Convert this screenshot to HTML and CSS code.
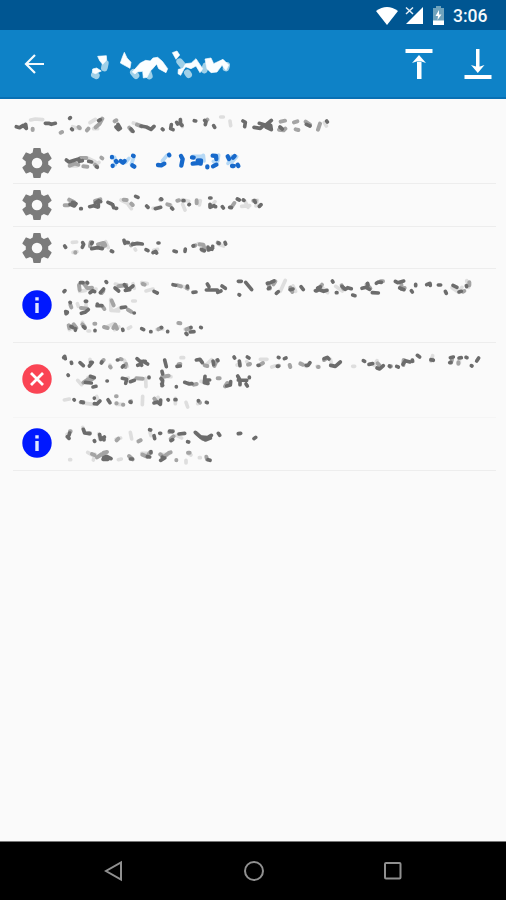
FILE: index.html
```
<!DOCTYPE html>
<html lang="en">
<head>
<meta charset="utf-8">
<title>Status</title>
<link rel="stylesheet" href="styles.css">
</head>
<body>
<svg class="defs" aria-hidden="true">
  <symbol id="gear" viewBox="2 2 20 20"><path d="M19.43 12.98c.04-.32.07-.64.07-.98s-.03-.66-.07-.98l2.11-1.65c.19-.15.24-.42.12-.64l-2-3.46c-.12-.22-.39-.3-.61-.22l-2.49 1c-.52-.4-1.08-.73-1.69-.98l-.38-2.65A.49.49 0 0 0 14 2h-4c-.25 0-.46.18-.49.42l-.38 2.65c-.61.25-1.17.59-1.69.98l-2.49-1c-.23-.09-.49 0-.61.22l-2 3.46c-.13.22-.07.49.12.64l2.11 1.65c-.04.32-.07.65-.07.98s.03.66.07.98l-2.11 1.65c-.19.15-.24.42-.12.64l2 3.46c.12.22.39.3.61.22l2.49-1c.52.4 1.08.73 1.69.98l.38 2.65c.03.24.24.42.49.42h4c.25 0 .46-.18.49-.42l.38-2.65c.61-.25 1.17-.59 1.69-.98l2.49 1c.23.09.49 0 .61-.22l2-3.46c.12-.22.07-.49-.12-.64l-2.11-1.65zM12 15.500a3.500 3.500 0 1 1 0-7 3.500 3.500 0 0 1 0 7z"/></symbol>
  <symbol id="info" viewBox="0 0 30 30"><circle cx="15" cy="15" r="14.700"/><path fill="#dfe6ff" d="M13.300 7.200h3.400v3.300h-3.400zM13.300 13h3.400v10h-3.400z"/></symbol>
</svg>

<header>
  <div class="status">
    <svg class="wifi" width="22" height="18" viewBox="0 0 22 18"><path fill="#fff" d="M0 4Q11-4 22 4L11 18z"/></svg>
    <svg class="signal" width="19" height="19" viewBox="0 0 19 19"><path fill="#fff" d="M18 1v17H1z"/><path stroke="#e4eef6" stroke-width="1.500" d="M1 1.500l7 6.500M8 1.500L1 8"/></svg>
    <svg class="battery" width="11" height="19" viewBox="0 0 11 19"><path fill="#6fa3bd" d="M3 0h5v2h3v13H0V2h3z"/><path fill="#fff" d="M0 14.500h11V19H0zM6 4L2.500 10H5l-.5 4L8.500 8.500H6z"/></svg>
    <span class="clock">3:06</span>
  </div>
  <div class="bar">
    <svg class="back" width="21" height="20" viewBox="0 0 21 20"><path d="M20 10H2M11 1L2 10l9 9"/></svg>
    <svg class="title" width="150" height="67" viewBox="264 90 450 201">
      <g class="pale"><path d="M316 190l-3 14M283 224l6 3M400 217l8 10M444 216l4 12M539 185l10 12M562 218l4 6M617 198l-4 12M680 196l-2 8"/></g>
      <g class="white"><path d="M293 169l26-2 1 13-12 13-9-11zM278 207l12-3 14 9-18 8-9-4zM373 157l8 17 12 13-3 18-29-16 6-17zM397 216l24-27 16-8 14 2 8-9 14-2 14 12 16 22-5 12-22-12-6-14-12 14-8 8-9 18-11 2-2-20-17 2-6 6zM517 158l14-5 8 12-11 13zM535 208l14-3 8-14 17-2 14-13 8 12 12 18-8 12-12-20-15 8-17-6-14 26-8-5zM615 177l18-3 8 17 28-13 17 17-8 16-12-15-15 20-18 2-12-12z"/></g>
    </svg>
    <svg class="upload" width="28" height="32" viewBox="0 0 28 32"><path d="M.5 1h27v4H.5zM12 14h4.500v17H12zM14 7l7 8-4.500-1.500h-5L7 15z"/></svg>
    <svg class="download" width="28" height="32" viewBox="0 0 28 32"><path d="M.5 27h27v4H.5zM12 1h3.500v18H12zM13.800 25L7 17l5 1.500h4L20.500 17z"/></svg>
  </div>
</header>

<main>
  <svg class="heading smudge" width="360" height="43" viewBox="39 -18 1080 129">
    <g class="l"><path d="M92 45l14-3 22 2M218 65l22 6M270 53l16-10M281 71h12M400 54l20 6M542 43l5 22M662 36l8 0M690 48l2 14M973 53l6 10"/></g>
    <g class="m"><path d="M98 75v-4M182 83l4-2M236 66l3 3M261 76l4-5M287 67l12-11 8-15M344 49l5-3M388 68l8 10M411 59l14 5M622 44l-3 3M837 74l14 2 5-5M842 50l13-3M954 74l6-18M882 52l10-3M917 50l13 9M887 73l8 2"/></g>
    <g class="d"><path d="M49 65l10 3 11-7 9 9-2-12M136 55l10 0 8 3 12-3M209 40l2-2M215 72l2 2M296 47l5-3M348 66l7 8 6-4-7-12M393 72l6 7M423 63l16 3 14 7 9-9M487 72l2 2M514 59l-2 12 7 3M530 52l3 5M541 44v12l5 5M583 47l4 1M614 46l4 4-2 9M641 62l3 5M729 48l7 4-2 13M762 67l19 3 12-11-15-4M798 66l16 8-2-13-14-1 16-14M840 66l7 6M919 58l11 5M980 48l2 3"/></g>
  </svg>

  <section class="row r1">
    <svg class="icon gear"><use href="#gear"/></svg>
    <svg class="smudge" width="430" height="41" viewBox="180 111 1290 123">
      <g class="l"><path d="M213 183h18M247 159l18 1 20 10M283 179l14-7"/></g>
      <g class="m"><path d="M209 182l15-6 11 3M250 184l12 1M241 159l18 0M304 158l3 2M285 179l6 5"/></g>
      <g class="d"><path d="M199 165l8 6 16-5 13-4M238 169l9-2M266 169l9 2M289 185l3 2"/></g>
      <g class="bl"><path d="M344 157l2 22M377 172l10-12M394 178l7-20M487 168l14-17M578 154l27 0M610 151l2 17M640 169l11 8M656 150l-3 18M684 175l12-21M710 155l-15 17"/></g>
      <g class="b"><path d="M336 156v1M338 182v1M348 168l2 3M362 168l7 5 5-5M399 152l2 1M397 181l6 4M474 180l10 1 9-5M507 149l1 2M543 153l5 9-4 20M576 157l5 1M578 176l16-2 8 2 1-10-10 0M622 184v3M638 152l10 1 1 9M639 184l10-5M683 154l4 8M704 153l-5 5M696 183h5M713 179l2 4"/></g>
    </svg>
  </section>

  <section class="row r2">
    <svg class="icon gear"><use href="#gear"/></svg>
    <svg class="smudge" width="430" height="42" viewBox="180 3 1290 126">
      <g class="l"><path d="M206 52l12 13M363 51l18 9M385 65l9 12M459 76l22-3M512 66l4 9M548 64l7 17M548 50l18 5M601 53l-3 13M645 56l-10 12M736 56l8 17M725 70l24-2M772 52l-4 17"/></g>
      <g class="m"><path d="M194 67l11 0M208 50l14 7M285 54l16-5M371 50l9 1M394 62l4 4M481 50l3-1M502 64l7 2M532 53l5-1M590 61v-9M695 72l8-12M760 53l7 0"/></g>
      <g class="d"><path d="M210 64l13 5 5-7-10-4M242 77l2 0M269 71l12-3 12 4M286 60l10-7 6 3M295 64v8M324 58l11 5M338 65l3 9M347 76l3 0M407 40l7 3M440 69l4 4M466 77l16-4M483 48l2 1M515 75l3 3M549 53l3 0M567 65l1-1M629 45l4 0M630 64l0 9 12-5M646 71h1M667 71l3 4M689 73l5 1M712 48l6 3M730 51l2 1M763 53l3 5M778 70l5-5"/></g>
    </svg>
  </section>

  <section class="row r3">
    <svg class="icon gear"><use href="#gear"/></svg>
    <svg class="smudge" width="430" height="41" viewBox="180 132 1290 123">
      <g class="l"><path d="M217 178l13-1M219 208l12-2M317 176l8 18M405 198l2 3M461 202l12-3M594 182l8 7M655 184l16 5"/></g>
      <g class="m"><path d="M226 208v1M272 178l-2 12M294 184l16-4M306 194l10-7-3-6M393 187l5-5M583 189l3-2M599 184l11 1 4 14M607 202l5 1M653 179l5 2"/></g>
      <g class="d"><path d="M194 189l3 4M248 179l3 5-4 9M275 197l18-3 14 3M275 182l2-4M334 204l4 2M372 172l3 9M380 178l5 1M397 184l15-3 15 2M438 200l6 3M459 209l8-4 3 5M474 180l3 0M522 204l7 2M556 198l-1 7M579 189l2-1M604 199l9 4M624 192l1 9 13-6M638 190l-2 9M655 180l2 1M675 178l2 5"/></g>
    </svg>
  </section>

  <section class="row r4">
    <svg class="icon info"><use href="#info"/></svg>
    <svg class="smudge" width="430" height="73" viewBox="180 3 1290 219">
      <g class="l"><path d="M246 44l20 17M239 70l18-3M273 66l15-3M346 48l25 6M399 47l4 14M425 44l17 3M438 69l21-6M543 53l14 6M232 107l3 8M258 98v17M332 94l1 33 23 2M345 128l17-9M398 99l8 0M208 185l13-6M247 163l8 18M264 189l5 0M317 178l23-10M344 185l13-8M385 181l7-4M471 184l17-1M555 184l14 4"/></g>
      <g class="m"><path d="M237 51l2 15M252 47l8 11M264 61l12-2M305 75l5-6M355 55l24-4M428 48l6 2M533 52l10 3M560 60l3 2M211 110l3 8M243 120l19 2M309 117l4 6M335 98l6 14M384 125l10 6M206 172l2 8M221 169l8 11M247 169l7 7M283 167h3M312 177l11 3M340 180l6-10 5 12M475 184l7-4M535 165l6 1M559 184l11-4"/></g>
      <g class="d"><path d="M192 71l3-3M241 44l8 0M261 43l2 2M270 74l8-6 6 3M301 74l10-11M318 41l2 2M345 60l11 9M373 50l12 15 14-11M376 67l13-2M462 70l6 3 4 2M519 50l8 2M562 54l1 4M579 73l9-1M622 48l5 8M619 66l18 0 15 0M653 73l10-4M666 54l10 7M715 40l9 0M737 43l18 22M717 80l2 1M210 103l1 1M198 137l4-3M197 131l5 1M244 136l11-3 10-8M256 100l4 0M291 113l15 0M292 108v4M364 119l13-2M402 135h1M213 175l5 3M226 182v5M250 176l5 4M285 187v1M368 184l1 3M425 182l6 3M452 191h1M484 178l1 1M503 190v1M558 196l3 3M571 192l11-1M573 178v1M602 178l2 1"/></g>
      <g transform="translate(759 0)">
        <g class="l"><path d="M82 70l15-33M120 54l8 16M206 57l18 17M248 55l20 14M597 59l20 14 10-15M641 38l6 20"/></g>
        <g class="m"><path d="M45 47l6 14M67 40l-6 9M112 59l6 13M191 69l16-19M266 52l5 10M341 49l11 12M383 40h7M445 49l1 14 9-3M649 43v9M630 71l4-2"/></g>
        <g class="d"><path d="M43 46l9-2 11-5M46 62l4-3M70 76l6-5M111 65l9-2M144 56l7 9M187 68l12-3 13 5 10-3M194 60l8-3M238 39l2 3M250 74l2 0M267 55l10 9 7-5 11 3M299 81l7 2M327 61l12-3 11 6M344 46l1 6M370 46l6-4 9 1M358 74l18 1M427 40l7 4 18-5M440 60l13 5M475 68l3 4M488 49v4M521 50l9-4M531 46l1 6M556 51h7M577 70l3 6M600 52l12 6M618 72l7-2M640 53l1 3"/></g>
      </g>
    </svg>
  </section>

  <section class="row r5">
    <svg class="icon" viewBox="0 0 30 30"><circle fill="#fa4454" cx="15" cy="15" r="14.700"/><path fill="none" stroke="#fff" stroke-width="2.800" d="M9 9l12 12M21 9L9 21"/></svg>
    <svg class="smudge" width="430" height="74" viewBox="180 3 1290 222">
      <g class="l"><path d="M270 52v12M330 69l2 8M373 55l9 18M543 47h8M621 66l14-13M711 69l10-3M740 59l9 9M233 115l12 13M264 107l18-2M377 111l8-3M437 109l1 25M505 104l8 0M567 121l10 4M603 118l18 7M193 174l15-3M257 184l22 3M290 163l6 15M349 187l20 0M428 163l-1 25M478 179l-4-13M558 181l5 14M593 185l5-7M526 169v16"/></g>
      <g class="m"><path d="M305 60l6-6M330 74l2 2M361 51l4 1M378 66l-2 9M536 67l5-1M614 70l8 2M650 56l-7 16M744 68l6-2M250 122l14-10 14-1M409 109l19 1M486 105l20-4M582 128l8-2M653 109h6M675 133l7-10M242 181l8-1M348 163h2M349 184l1 0M369 188l1 0M390 179l3-1M463 170l6 9M600 182l-3-4"/></g>
      <g class="d"><path d="M191 47l3-4 2 7M214 61l1 3M240 62l10 9M268 72l9-11-5 0M304 63l2-3M352 54l2 0M367 75l4-4M411 50l10 9 15-1M413 70l10-3 2 3M430 58l13 8M494 54l5 20M531 73l10-1M589 54l11-2 7 10M639 57l2 11M653 54l1 2M702 45l2 3M718 57l2 14M742 45l5 3M204 99l1 1M256 121l18 2M271 103l12 4M279 135l9-2M321 117h1M367 109l13 3-3 12M391 119l12-4M447 105v2M486 88l2 8M483 110l5 5-2 16M485 126l3 4M554 121l14 5 8-1M529 134v1M615 103l-2 19 11 2M616 114l13 0M680 132l11-3 1-10M713 102l7 12 0 14M715 114l25 1M738 126l4 6M748 105v2M222 173l1 1M244 180l6 2M283 168v1M283 185l8 1 9-9M324 173l6 9M391 180l2 1M462 183l11-3 8 7 1-13M504 173l1 1M525 173l3 0M595 176v1M619 181l3 1"/></g>
      <g transform="translate(759 0)">
        <g class="l"><path d="M22 52l20 0M56 75l10-3M143 63l17 10M192 73h4M232 52l4 14M299 73h6M364 70l8-14M539 41l-5 17M619 51v13"/></g>
        <g class="m"><path d="M22 68l8-5M74 72l4-1M110 69l2 6M142 65l7 3M195 75h2M213 54l7-5M374 64l6 7M412 74l2-1M452 54l-1 15M534 54l5-1M597 53l-3 9M616 61v4"/></g>
        <g class="d"><path d="M15 70l3 0M76 46l2 1M94 50l5-2M73 73l3 0M159 70l6 0 6-8M213 50l10-4 5 5M233 70l14 3 15-13M331 56l4 2M348 67l11-2M372 78l8 3 11-10M409 72l2 1M431 73l5 2M450 67l7-11 14 4M478 54l1 4M493 40l7 5M534 53l7 2M592 47l9-2M590 62l4-1M618 48l7-1M639 46l3 1M655 71l2 1M671 57l6-9"/></g>
      </g>
    </svg>
  </section>

  <section class="row r6">
    <svg class="icon info"><use href="#info"/></svg>
    <svg class="smudge" width="430" height="52" viewBox="180 0 1290 156">
      <g class="l"><path d="M201 49l8-4M248 28l8 17M296 47l4 18M348 64l14-4M391 43l4 20M413 70l9-4M450 43l3 10M530 52l15 8M209 125h3M263 103l16 9M280 126l5-17M355 125l9-2M425 106l20 0M479 109l25 1M558 127v8M565 107l8 4M598 119h3"/></g>
      <g class="m"><path d="M210 40l2 0M266 46l4 0M350 67l5-5M416 70l6-3M508 42l11-3M512 63l9-8M589 46l19 16M276 108l7 3M291 118l15-10 12 10M311 104l10-2M387 114l11 10M427 110l14 6 9-13M481 109l10 9 11-10M506 105l6-2M529 126v1M564 104l5 0M619 116l2 8"/></g>
      <g class="d"><path d="M202 56l5 5M207 52l2-7M250 34l4 11 15 2M283 68l1 2M299 50l3 14 11-7M312 66v-4M449 35l3 1M462 53l2 9M479 46h3M509 39l9 2M513 68l5-3M537 48l17-2M563 71l3 1M586 43l15 14 15 9 15-6M605 57l18 2 11-7M655 46l4 6M715 47l7-1M762 62l5-4M311 119l9-4 13 7M309 124l15 0M391 123l6 0M442 116l7 1M453 101v4M487 120v-3M482 127l12-7M624 125l6 2"/></g>
    </svg>
  </section>
</main>

<nav>
  <svg width="20" height="22" viewBox="0 0 20 22"><path d="M17 2.500v17L2 11z"/></svg>
  <svg width="22" height="22" viewBox="0 0 22 22"><circle cx="11" cy="11" r="9"/></svg>
  <svg width="20" height="20" viewBox="0 0 20 20"><rect x="2" y="2" width="15.500" height="15.500" rx="1"/></svg>
</nav>
</body>
</html>
```
FILE: styles.css
```
* { box-sizing: border-box; }

body {
  margin: 0;
  height: 900px;
  display: flex;
  flex-direction: column;
  overflow: hidden;
  background: #fafafa;
  font-family: Roboto, sans-serif;
}

svg { display: block; flex: none; }
.defs { display: none; }

.status {
  height: 30px;
  display: flex;
  align-items: center;
  justify-content: flex-end;
  padding-top: 1px;
  padding-right: 18px;
  background: #005692;
}
.wifi { margin-right: 7px; }
.signal { margin-right: 9px; }
.battery { margin-right: 9px; }
.clock {
  width: 35px;
  color: #f4f9fc;
  font-size: 17.5px;
  font-weight: 500;
  line-height: 30px;
  white-space: nowrap;
}

.bar {
  height: 69px;
  display: flex;
  align-items: center;
  padding: 0 14px 0 24px;
  background: #0e82c7;
  border-bottom: 2px solid #0870b4;
}
.back { fill: none; stroke: #f4fafd; stroke-width: 2.2; }
.title { margin-left: 43px; margin-right: auto; }
.pale { fill: none; stroke: #9fd0e8; stroke-width: 20; stroke-linecap: round; }
.white { fill: #fbfeff; stroke: #fbfeff; stroke-width: 2; stroke-linejoin: round; }
.upload, .download { fill: #fff; }
.upload { margin-right: 31px; }

main { flex: 1; padding: 0 10px 0 13px; }

.row {
  display: flex;
  align-items: center;
  padding-left: 9px;
  border-bottom: 1px solid #ededed;
}
.r1 { height: 42px; }
.r2 { height: 43px; }
.r3 { height: 42px; }
.r4 { height: 74px; }
.r5 { height: 75px; border-bottom-color: #f5f5f5; }
.r6 { height: 53px; }

.icon { width: 30px; height: 30px; margin-right: 8px; }
.r4 .icon, .r5 .icon, .r6 .icon { margin-bottom: 2px; }
.gear { fill: #7b7b7b; }
.info { fill: #0018ff; }

.smudge { fill: none; stroke-linecap: round; stroke-linejoin: round; }
.l { stroke: #dedede; stroke-width: 11; }
.m { stroke: #a4a4a4; stroke-width: 12; }
.d { stroke: #6c6c6c; stroke-width: 11; }
.bl { stroke: #b5d8f5; stroke-width: 11; }
.b { stroke: #1769cb; stroke-width: 13; }

nav {
  height: 59px;
  display: flex;
  align-items: center;
  justify-content: space-between;
  padding: 0 103px 0 104px;
  background: #000;
  border-top: 1px solid #777;
}
nav svg { fill: none; stroke: #909090; stroke-width: 2; }
```
